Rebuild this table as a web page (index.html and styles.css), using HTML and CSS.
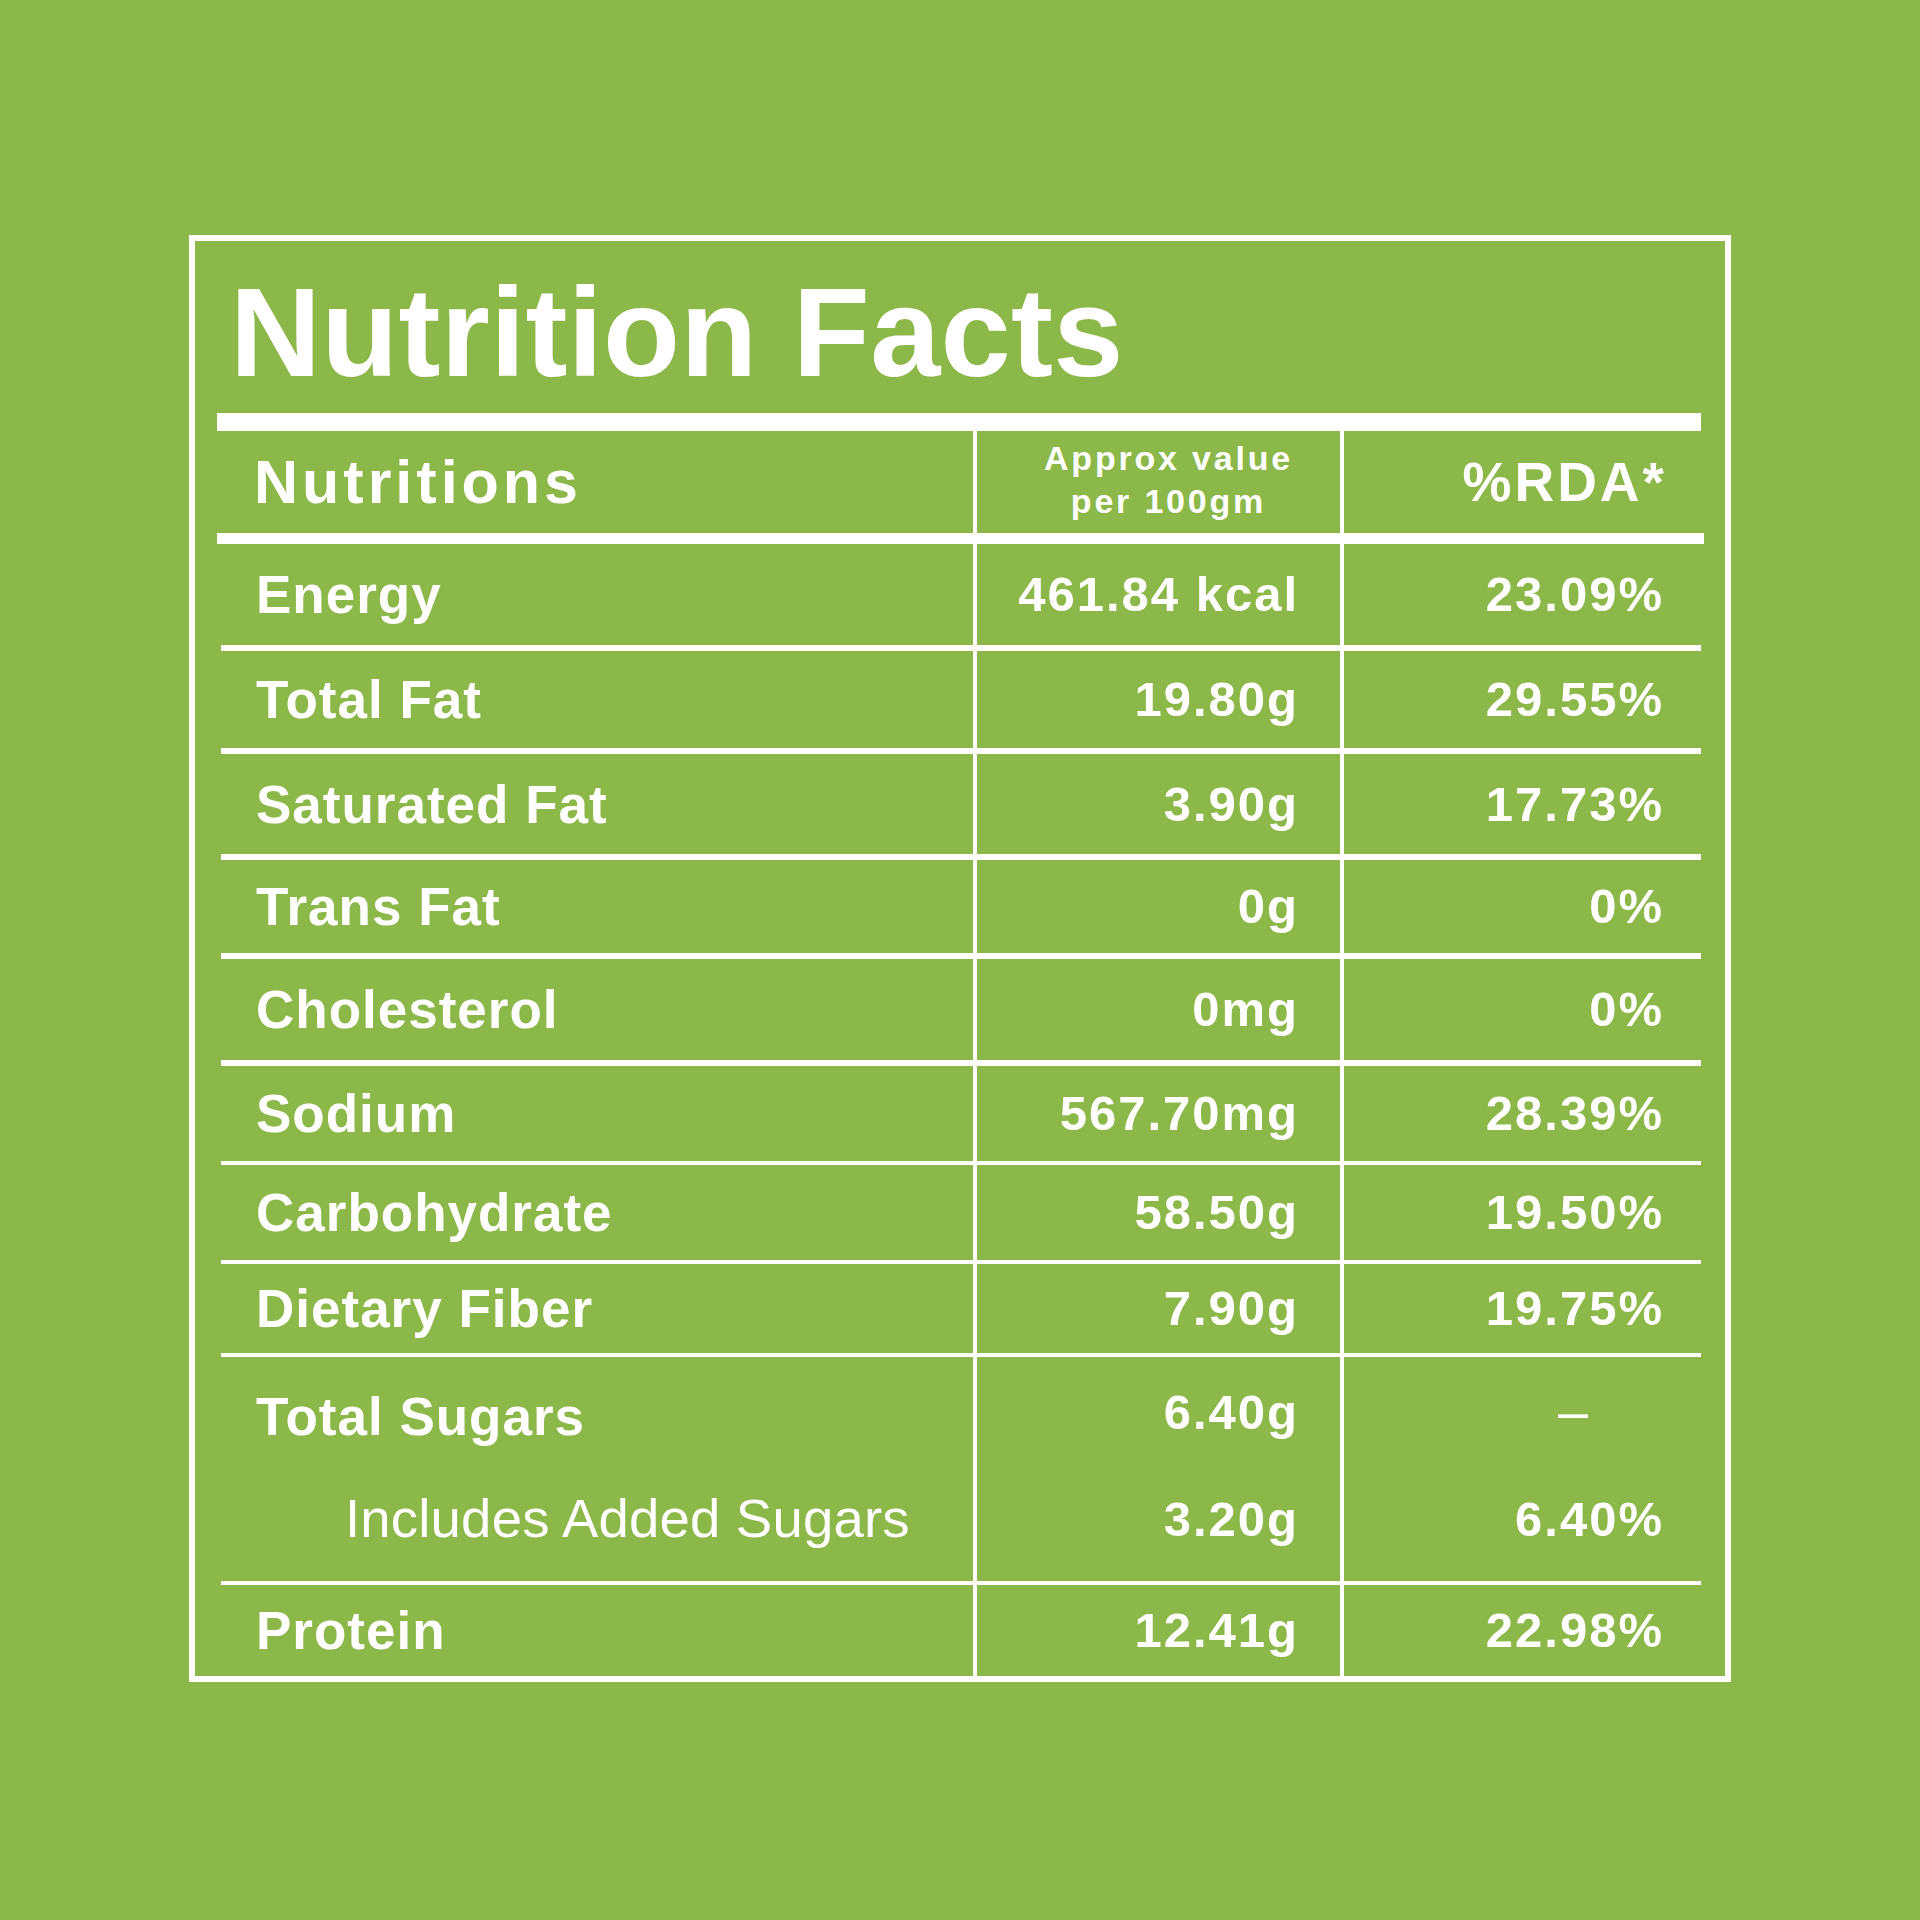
FILE: index.html
```html
<!DOCTYPE html>
<html lang="en">
<head>
<meta charset="utf-8">
<title>Nutrition Facts</title>
<link rel="stylesheet" href="styles.css">
</head>
<body>
<div class="card">
  <h1 class="title">Nutrition Facts</h1>
  <div class="rule-thick"></div>
  <div class="table">
    <div class="row head">
      <div class="cell name">Nutritions</div>
      <div class="cell approx"><span>Approx value<br>per 100gm</span></div>
      <div class="cell pct">%RDA*</div>
    </div>
    <div class="row">
      <div class="cell name">Energy</div>
      <div class="cell num">461.84 kcal</div>
      <div class="cell pct">23.09%</div>
    </div>
    <div class="row">
      <div class="cell name">Total Fat</div>
      <div class="cell num">19.80g</div>
      <div class="cell pct">29.55%</div>
    </div>
    <div class="row">
      <div class="cell name">Saturated Fat</div>
      <div class="cell num">3.90g</div>
      <div class="cell pct">17.73%</div>
    </div>
    <div class="row">
      <div class="cell name">Trans Fat</div>
      <div class="cell num">0g</div>
      <div class="cell pct">0%</div>
    </div>
    <div class="row">
      <div class="cell name">Cholesterol</div>
      <div class="cell num">0mg</div>
      <div class="cell pct">0%</div>
    </div>
    <div class="row thin">
      <div class="cell name">Sodium</div>
      <div class="cell num">567.70mg</div>
      <div class="cell pct">28.39%</div>
    </div>
    <div class="row thin">
      <div class="cell name">Carbohydrate</div>
      <div class="cell num">58.50g</div>
      <div class="cell pct">19.50%</div>
    </div>
    <div class="row thin">
      <div class="cell name">Dietary Fiber</div>
      <div class="cell num">7.90g</div>
      <div class="cell pct">19.75%</div>
    </div>
    <div class="row thin sugar">
      <div class="cell name">
        <div class="l1">Total Sugars</div>
        <div class="l2 sub">Includes Added Sugars</div>
      </div>
      <div class="cell num">
        <div class="l1">6.40g</div>
        <div class="l2">3.20g</div>
      </div>
      <div class="cell pct">
        <div class="l1 dash">–</div>
        <div class="l2">6.40%</div>
      </div>
    </div>
    <div class="row last">
      <div class="cell name">Protein</div>
      <div class="cell num">12.41g</div>
      <div class="cell pct">22.98%</div>
    </div>
  </div>
</div>
</body>
</html>
```

FILE: styles.css
```css
html, body {
  margin: 0;
  background: #8bb848;
}

body {
  box-sizing: border-box;
  min-height: 1920px;
  padding: 235px 0 0 189px;
  font-family: "Liberation Sans", Arial, Helvetica, sans-serif;
  color: #fff;
}

.card {
  box-sizing: border-box;
  width: 1542px;
  border: 6px solid #fff;
  padding: 0 24px 0 22px;
}

.title {
  margin: 0;
  padding: 29px 0 0 13px;
  height: 125px;
  font-size: 126px;
  line-height: 125px;
  font-weight: 700;
  letter-spacing: 0.3px;
  white-space: nowrap;
}

.rule-thick {
  width: 1484px;
  height: 18px;
  margin-top: 18px;
  background: #fff;
}

.table {
  display: grid;
  grid-template-rows: 113px 107px 103px 106px 99px 107px 99px 99px 93px 228px 91px;
}

.row {
  box-sizing: border-box;
  display: grid;
  grid-template-columns: 752px 367px 361px;
  width: 1480px;
  margin-left: 4px;
  border-bottom: 6px solid #fff;
}

.row.thin {
  border-bottom-width: 4px;
}

.row.last {
  border-bottom: 0;
}

.row.head {
  grid-template-columns: 756px 367px 364px;
  width: 1487px;
  margin-left: 0;
  border-bottom-width: 11px;
}

.cell {
  box-sizing: border-box;
  display: flex;
  align-items: center;
  line-height: 1;
  white-space: nowrap;
}

.cell + .cell {
  border-left: 4px solid #fff;
}

.name {
  padding-left: 35px;
  font-size: 53px;
  font-weight: 700;
  letter-spacing: 1px;
}

.num {
  justify-content: flex-end;
  padding-right: 41px;
  font-size: 49px;
  font-weight: 700;
  letter-spacing: 2px;
}

.pct {
  justify-content: flex-end;
  padding-right: 37px;
  font-size: 49px;
  font-weight: 700;
  letter-spacing: 2px;
}

.head .name {
  padding-left: 37px;
  font-size: 61px;
  letter-spacing: 4px;
}

.head .pct {
  font-size: 55px;
  letter-spacing: 3px;
}

.approx {
  justify-content: center;
  padding: 0 0 4px 20px;
  font-size: 34px;
  font-weight: 700;
  letter-spacing: 2.8px;
  line-height: 43px;
  text-align: center;
}

/* Total sugars block with two sub-lines */
.row.sugar .cell {
  display: block;
}

.row.sugar .num,
.row.sugar .pct {
  text-align: right;
}

.l1 {
  height: 120px;
  line-height: 120px;
}

.row.sugar .num .l1 {
  line-height: 110px;
}

.l2 {
  height: 84px;
  line-height: 84px;
}

.sub {
  padding-left: 89px;
  font-size: 54.5px;
  font-weight: 400;
  letter-spacing: 0.2px;
}

.dash {
  padding-right: 76px;
  line-height: 108px;
  font-size: 54px;
  font-weight: 400;
  letter-spacing: 0;
}
```
